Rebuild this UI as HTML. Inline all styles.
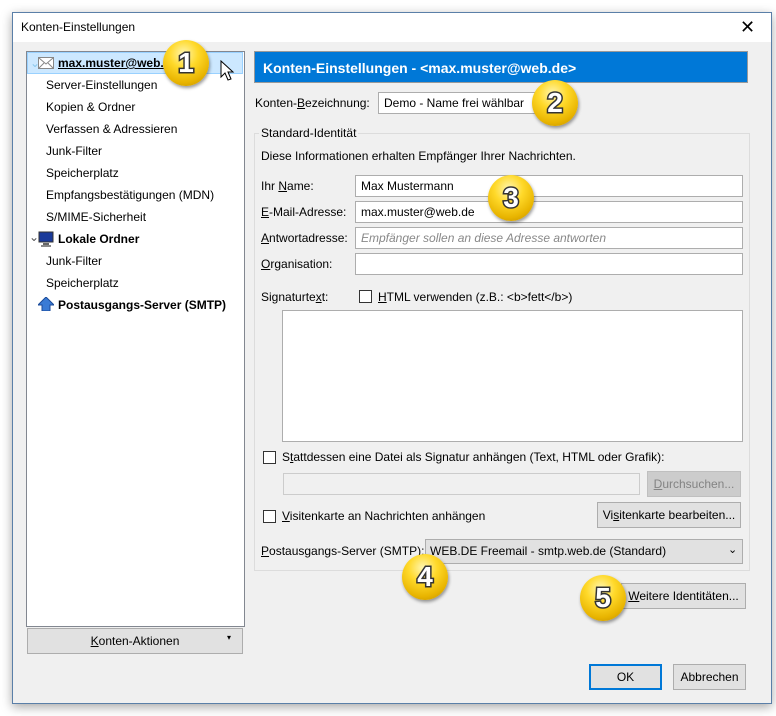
<!DOCTYPE html>
<html><head><meta charset="utf-8"><style>
*{box-sizing:border-box;margin:0;padding:0}
body{width:776px;height:716px;background:#fff;font-family:"Liberation Sans",sans-serif;font-size:12px;color:#000;position:relative;overflow:hidden}
.a{position:absolute}
.win{left:12px;top:12px;width:760px;height:692px;border:1px solid #5a7fa8;background:#f0f0f0;box-shadow:0 3px 10px rgba(0,0,0,.35)}
.tb{left:12px;top:12px;width:760px;height:30px;background:#fff;border:1px solid #5a7fa8;border-bottom:none}
.in{background:#fff;border:1px solid #adadad;height:22px;padding:3px 5px;white-space:nowrap}
.btn{background:#e1e1e1;border:1px solid #adadad;text-align:center;line-height:24px}
.cb{width:13px;height:13px;border:1px solid #333;background:#fff}
.t{white-space:nowrap}
.row{left:46px}
.badge{width:46px;height:46px;border-radius:50%;background:radial-gradient(circle at 45% 30%,#fff6b0 0%,#ffd92a 35%,#e8b400 70%,#b88600 100%);box-shadow:1px 2px 3px rgba(0,0,0,.4);font-weight:bold;font-size:28px;color:#fff;text-align:center;line-height:46px;-webkit-text-stroke:3px #333;paint-order:stroke fill;font-family:"Liberation Sans",sans-serif}
</style></head><body>
<div class="a win"></div>
<div class="a tb"></div>
<div class="a t" style="left:21px;top:20px">Konten-Einstellungen</div>
<div class="a" style="left:740px;top:17px;font-size:18px">✕</div>

<div class="a" style="left:26px;top:51px;width:219px;height:576px;background:#fff;border:1px solid #828790"></div>
<div class="a" style="left:27px;top:52px;width:216px;height:22px;background:#cce8ff;border:1px solid #99d1ff"></div>
<div class="a" style="left:30px;top:56px;color:#8cc8ec">⌄</div>
<svg class="a" style="left:38px;top:57px" width="16" height="12"><rect x="0.5" y="0.5" width="15" height="11" fill="#fff" stroke="#888"/><path d="M1 1L8 7L15 1M1 11L6 6M15 11L10 6" stroke="#888" fill="none"/></svg>
<div class="a t" style="left:58px;top:56px;font-weight:bold;text-decoration:underline">max.muster@web.</div>
<div class="a t row" style="top:78px">Server-Einstellungen</div>
<div class="a t row" style="top:100px">Kopien &amp; Ordner</div>
<div class="a t row" style="top:122px">Verfassen &amp; Adressieren</div>
<div class="a t row" style="top:144px">Junk-Filter</div>
<div class="a t row" style="top:166px">Speicherplatz</div>
<div class="a t row" style="top:188px">Empfangsbestätigungen (MDN)</div>
<div class="a t row" style="top:210px">S/MIME-Sicherheit</div>
<div class="a" style="left:29px;top:230px;color:#555">⌄</div>
<svg class="a" style="left:38px;top:231px" width="16" height="16"><rect x="1" y="1" width="14" height="10" fill="#1a3a9a" stroke="#333"/><rect x="5" y="12" width="6" height="2" fill="#666"/><rect x="3" y="14" width="10" height="2" fill="#888"/></svg>
<div class="a t" style="left:58px;top:232px;font-weight:bold">Lokale Ordner</div>
<div class="a t row" style="top:254px">Junk-Filter</div>
<div class="a t row" style="top:276px">Speicherplatz</div>
<svg class="a" style="left:38px;top:297px" width="16" height="14"><path d="M8 0L16 8H12V14H4V8H0Z" fill="#3a7bd5" stroke="#1a4a99"/></svg>
<div class="a t" style="left:58px;top:298px;font-weight:bold">Postausgangs-Server (SMTP)</div>
<div class="a btn" style="left:27px;top:628px;width:216px;height:26px"><u>K</u>onten-Aktionen</div>
<div class="a" style="left:227px;top:633px;font-size:8px">▾</div>

<div class="a" style="left:254px;top:51px;width:494px;height:32px;background:#0078d7;border:1px solid #999"></div>
<div class="a t" style="left:263px;top:60px;color:#fff;font-weight:bold;font-size:14px">Konten-Einstellungen - &lt;max.muster@web.de&gt;</div>
<div class="a t" style="left:255px;top:96px">Konten-<u>B</u>ezeichnung:</div>
<div class="a in" style="left:378px;top:92px;width:190px">Demo - Name frei wählbar</div>

<div class="a" style="left:254px;top:133px;width:496px;height:438px;border:1px solid #dcdcdc"></div>
<div class="a t" style="left:259px;top:126px;background:#f0f0f0;padding:0 2px">Standard-Identität</div>
<div class="a t" style="left:261px;top:149px">Diese Informationen erhalten Empfänger Ihrer Nachrichten.</div>
<div class="a t" style="left:261px;top:179px">Ihr <u>N</u>ame:</div>
<div class="a in" style="left:355px;top:175px;width:388px">Max Mustermann</div>
<div class="a t" style="left:261px;top:205px"><u>E</u>-Mail-Adresse:</div>
<div class="a in" style="left:355px;top:201px;width:388px">max.muster@web.de</div>
<div class="a t" style="left:261px;top:231px"><u>A</u>ntwortadresse:</div>
<div class="a in" style="left:355px;top:227px;width:388px;color:#888;font-style:italic">Empfänger sollen an diese Adresse antworten</div>
<div class="a t" style="left:261px;top:257px"><u>O</u>rganisation:</div>
<div class="a in" style="left:355px;top:253px;width:388px"></div>
<div class="a t" style="left:261px;top:290px">Signaturte<u>x</u>t:</div>
<div class="a cb" style="left:359px;top:290px"></div>
<div class="a t" style="left:378px;top:290px"><u>H</u>TML verwenden (z.B.: &lt;b&gt;fett&lt;/b&gt;)</div>
<div class="a" style="left:282px;top:310px;width:461px;height:132px;background:#fff;border:1px solid #adadad"></div>
<div class="a cb" style="left:263px;top:451px"></div>
<div class="a t" style="left:282px;top:450px">S<u>t</u>attdessen eine Datei als Signatur anhängen (Text, HTML oder Grafik):</div>
<div class="a" style="left:283px;top:473px;width:357px;height:22px;background:#f0f0f0;border:1px solid #ccc"></div>
<div class="a btn" style="left:647px;top:471px;width:94px;height:26px;color:#838383;background:#ccc;border-color:#bfbfbf"><u>D</u>urchsuchen...</div>
<div class="a cb" style="left:263px;top:510px"></div>
<div class="a t" style="left:282px;top:509px"><u>V</u>isitenkarte an Nachrichten anhängen</div>
<div class="a btn" style="left:597px;top:502px;width:144px;height:26px">Vi<u>s</u>itenkarte bearbeiten...</div>
<div class="a t" style="left:261px;top:544px"><u>P</u>ostausgangs-Server (SMTP):</div>
<div class="a btn" style="left:425px;top:539px;width:318px;height:25px;text-align:left;padding-left:4px;line-height:23px">WEB.DE Freemail - smtp.web.de (Standard)</div>
<div class="a" style="left:728px;top:543px;font-size:11px">⌄</div>
<div class="a btn" style="left:621px;top:583px;width:125px;height:26px"><u>W</u>eitere Identitäten...</div>
<div class="a btn" style="left:589px;top:664px;width:73px;height:26px;border:2px solid #0078d7;line-height:22px">OK</div>
<div class="a btn" style="left:673px;top:664px;width:73px;height:26px">Abbrechen</div>

<svg class="a" style="left:220px;top:60px" width="16" height="22"><path d="M1 1V17L5 13L8 20L11 19L8 12H13Z" fill="#fff" stroke="#000"/></svg>
<div class="a badge" style="left:163px;top:40px">1</div>
<div class="a badge" style="left:532px;top:80px">2</div>
<div class="a badge" style="left:488px;top:175px">3</div>
<div class="a badge" style="left:402px;top:554px">4</div>
<div class="a badge" style="left:580px;top:575px">5</div>
</body></html>
